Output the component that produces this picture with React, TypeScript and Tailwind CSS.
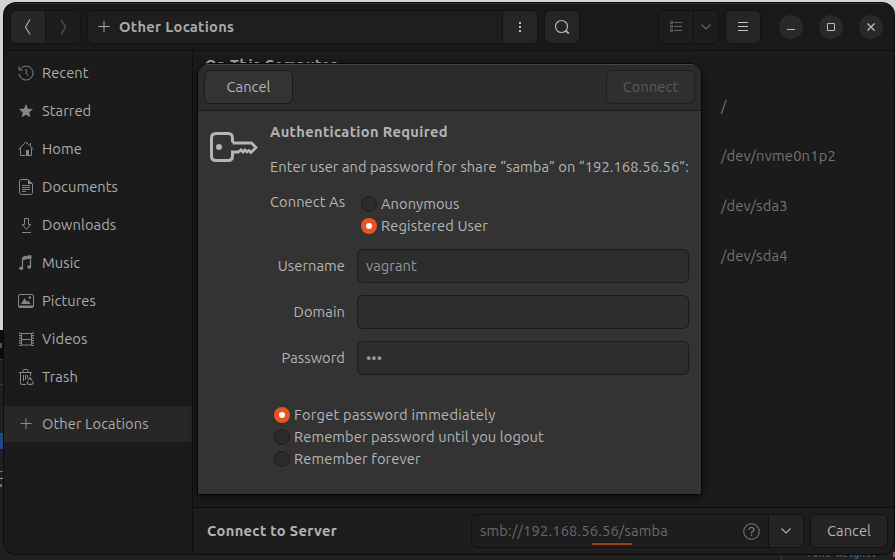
import React from "react";

type Kids = { children?: React.ReactNode; className?: string };

function Icon({ children, className = "" }: Kids) {
  return (
    <svg width="16" height="16" viewBox="0 0 16 16" fill="none" stroke="currentColor" className={`shrink-0 ${className}`}>
      {children}
    </svg>
  );
}

const plus = <path d="M2.5 7.5H13.5M8 2V13" />;
const chevron = <path d="M3.5 5.5L8 10L12.5 5.5" strokeWidth="1.1" />;

const places = [
  {
    name: "Recent",
    icon: <path d="M2.2 4.2A7 7 0 1 1 1.1 9M1 1.5V5H4.5M8.2 4V8.5L10.5 10.8" />,
  },
  {
    name: "Starred",
    icon: <path d="M8 1L10 5.7L15 6.1L11.2 9.4L12.4 14.3L8 11.7L3.6 14.3L4.8 9.4L1 6.1L6 5.7Z" fill="currentColor" stroke="none" />,
  },
  {
    name: "Home",
    icon: (
      <>
        <path d="M.5 8.3L8 1L15.5 8.3M2.5 7V14.5H7.5M13.5 7V14.5H11M12.5 2V4.5" />
        <path d="M8 9H11V15H8Z" fill="currentColor" stroke="none" />
      </>
    ),
  },
  {
    name: "Documents",
    icon: (
      <>
        <path d="M10 .5H3.5Q1.5 .5 1.5 2.5V13.5Q1.5 15.5 3.5 15.5H12.5Q14.5 15.5 14.5 13.5V5M4 6.5H12M4 8.5H12M4 10.5H12M4 12.5H8" />
        <path d="M10 0L15 5H10Z" fill="currentColor" stroke="none" />
      </>
    ),
  },
  {
    name: "Downloads",
    icon: <path d="M6.5 1.5H10.5V7.5H12.7L8.5 12.4L4.3 7.5H6.5ZM4 15.5H13" />,
  },
  {
    name: "Music",
    icon: (
      <>
        <path d="M5 2L13 .5V3L5 4.5Z" fill="currentColor" />
        <path d="M4.5 3V13M12.5 2V11.5" strokeWidth="1.2" />
        <ellipse cx="3.2" cy="13.2" rx="2" ry="1.7" fill="currentColor" stroke="none" />
        <ellipse cx="11.2" cy="12" rx="2" ry="1.7" fill="currentColor" stroke="none" />
      </>
    ),
  },
  {
    name: "Pictures",
    icon: (
      <>
        <rect x=".5" y="1.5" width="15" height="13" rx="1.5" />
        <path d="M1 12.5H15V14.5H1Z" fill="currentColor" stroke="none" />
        <path d="M3 11L6.5 5L9 9L10.5 7.5L12.5 11Z" fill="currentColor" stroke="none" />
        <circle cx="11.8" cy="4.6" r="1.3" fill="currentColor" stroke="none" />
      </>
    ),
  },
  {
    name: "Videos",
    icon: (
      <>
        <path d="M3.5 2V14.5M13.5 2V14.5M3.5 2.5H13.5M3.5 8.5H13.5M3.5 14H13.5" />
        <path d="M2 1.5V15M15 1.5V15" strokeWidth="2" strokeDasharray="1.3 1.2" />
      </>
    ),
  },
  {
    name: "Trash",
    icon: (
      <>
        <path d="M1 3.5H14M5 3V1.5Q5 .5 6 .5H9Q10 .5 10 1.5V3M2.500 4V14Q2.500 15.500 4 15.500H8M12.500 4V7M5.500 6V12M7.500 6V11M9.500 6V9" />
        <path d="M10 11L12 8.600L14.200 11.600M15 12.500Q15.400 15.300 13 15.300H10.500Q8.500 14.500 9.800 12.300" strokeWidth="1.2" />
      </>
    ),
  },
];

const volumes = ["/", "/dev/nvme0n1p2", "/dev/sda3", "/dev/sda4"];

function Radio({ on, children, className = "" }: Kids & { on?: boolean }) {
  return (
    <div className={`flex h-[22px] items-center gap-1 whitespace-nowrap ${className}`}>
      <span
        className={`flex size-4 shrink-0 items-center justify-center rounded-full ${
          on ? "bg-[#e95420]" : "border border-[#1c1c1c] bg-[#2b2b2b]"
        }`}
      >
        {on && <span className="size-[6px] rounded-full bg-white" />}
      </span>
      <span>{children}</span>
    </div>
  );
}

function Field({ label, value }: { label: string; value: string }) {
  return (
    <label className="flex h-[34px] items-center gap-3">
      <span className="w-[75px] text-right">{label}</span>
      <span className="flex h-full w-[332px] items-center rounded-[6px] border border-[#1b1b1b] bg-[#2d2d2d] px-2 text-[#979797]">
        {value}
      </span>
    </label>
  );
}

function WindowButton({ children }: Kids) {
  return (
    <span className="flex size-6 items-center justify-center rounded-full bg-[#292929] text-[#bcbcbc]">
      <Icon>{children}</Icon>
    </span>
  );
}

function HeaderBar() {
  return (
    <header className="flex h-12 shrink-0 items-center border-b border-[#101010] border-t border-t-[#2c2c2c] bg-[#191919] pl-1.5 pr-[11px] text-[#a9a9a9]">
      <div className="flex h-[34px] w-[71px] overflow-hidden rounded-[6px] border border-[#121212]">
        <span className="flex w-[35px] items-center justify-center border-r border-[#121212] bg-[#272727]">
          <Icon><path d="M10 .5L5.500 8L10 15.500" strokeWidth="1.2" /></Icon>
        </span>
        <span className="flex flex-1 items-center justify-center bg-[#1d1d1d] text-[#555]">
          <Icon><path d="M6 .5L10.500 8L6 15.500" strokeWidth="1.2" /></Icon>
        </span>
      </div>
      <div className="ml-1.5 flex h-[34px] w-[451px] overflow-hidden rounded-[6px] border border-[#121212] bg-[#1e1e1e]">
        <div className="flex flex-1 items-center gap-[7px] pl-[8px] font-bold tracking-[0.3px]">
          <Icon>{plus}</Icon>
          <span>Other Locations</span>
        </div>
        <span className="flex w-[35px] items-center justify-center border-l border-[#121212] bg-[#252525] text-[#c0c0c0]">
          <Icon><path d="M7 3H9V5H7ZM7 7H9V9H7ZM7 11H9V13H7Z" fill="currentColor" stroke="none" /></Icon>
        </span>
      </div>
      <span className="ml-1.5 flex h-[34px] w-9 items-center justify-center rounded-[6px] border border-[#121212] bg-[#252525] text-[#b4b4b4]">
        <Icon><circle cx="7.5" cy="7.5" r="6" strokeWidth="1.2" /><path d="M11.5 11.5L14.8 14.5" strokeWidth="1.8" /></Icon>
      </span>
      <div className="ml-auto flex h-[34px] w-[61px] overflow-hidden rounded-[6px] border border-[#121212] bg-[#1d1d1d] text-[#646464]">
        <span className="flex w-[35px] items-center justify-center border-r border-[#121212]">
          <Icon><path d="M2.5 2.5H4.5V4.5H2.5ZM2.5 6.5H4.5V8.5H2.5ZM2.5 10.5H4.5V12.5H2.5ZM6 3.5H14M6 7.5H14M6 11.5H14" /></Icon>
        </span>
        <span className="flex flex-1 items-center justify-center"><Icon>{chevron}</Icon></span>
      </div>
      <span className="ml-1.5 flex h-[34px] w-9 items-center justify-center rounded-[6px] border border-[#121212] bg-[#252525] text-[#c0c0c0]">
        <Icon><path d="M3 3.5H13M3 7.5H13M3 11.5H13" /></Icon>
      </span>
      <div className="ml-[18px] flex gap-4">
        <WindowButton><path d="M4 10.5H12" /></WindowButton>
        <WindowButton><path d="M4.5 4.5H11.5V11.5H4.5Z" /></WindowButton>
        <WindowButton><path d="M4.5 4.5L11.5 11.5M11.5 4.5L4.5 11.5" strokeWidth="1.4" /></WindowButton>
      </div>
    </header>
  );
}

function Sidebar() {
  return (
    <nav className="flex w-[189px] shrink-0 flex-col border-r border-[#0f0f0f] bg-[#1b1b1b] pt-[3px] text-[#acacac]">
      {places.map((p) => (
        <div key={p.name} className="flex h-[38px] items-center gap-2 pl-3.5">
          <Icon className="text-[#858585]">{p.icon}</Icon>
          <span>{p.name}</span>
        </div>
      ))}
      <div className="mt-1 border-t border-[#171717]" />
      <div className="mt-[5px] flex h-9 items-center gap-2 bg-[#272727] pl-3.5">
        <Icon className="text-[#8d8d8d]">{plus}</Icon>
        <span>Other Locations</span>
      </div>
    </nav>
  );
}

function ConnectBar() {
  return (
    <footer className="flex h-[47px] items-center border-t border-[#0f0f0f] bg-[#1d1d1d] pl-3.5 pr-1.5 text-[#b4b4b4]">
      <span className="font-bold tracking-[0.34px]">Connect to Server</span>
      <div className="relative ml-auto flex h-[34px] w-[333px] overflow-hidden rounded-[6px] border border-[#111]">
        <div className="flex flex-1 items-center justify-between pl-2 pr-2 text-[#6a6a6a]">
          <span className="tracking-[0.18px]">smb://192.168.56.56/samba</span>
          <svg width="17" height="17" viewBox="0 0 17 17" fill="none" stroke="#858585">
            <circle cx="8.5" cy="8.5" r="7.8" />
            <path d="M6 6.8Q6 4.5 8.5 4.5T11 6.7Q11 7.8 9.6 8.5T8.5 10.5" strokeWidth="1.2" />
            <path d="M8 11.8H9.2V13H8Z" fill="#858585" stroke="none" />
          </svg>
        </div>
        <span className="flex w-[35px] items-center justify-center border-l border-[#111] bg-[#242424]">
          <Icon>{chevron}</Icon>
        </span>
        <span className="absolute bottom-[2px] left-[120px] h-[2px] w-10 bg-[#a23c18]" />
      </div>
      <span className="ml-1.5 flex h-[34px] w-[78px] items-center justify-center rounded-[6px] border border-[#111] bg-[#242424]">
        Cancel
      </span>
    </footer>
  );
}

function AuthDialog() {
  return (
    <section className="absolute left-[197px] top-[63px] flex h-[432px] w-[505px] flex-col overflow-hidden rounded-t-[12px] border border-[#060606] bg-[#333] text-[#b5b5b5] shadow-[0_3px_10px_rgba(0,0,0,0.5)]">
      <div className="flex h-[47px] shrink-0 items-center justify-between border-b border-[#1b1b1b] border-t border-t-[#444] bg-[#2b2b2b] px-1.5">
        <span className="-mt-px flex h-[34px] w-[89px] items-center justify-center rounded-[6px] border border-[#1b1b1b] bg-[#333]">Cancel</span>
        <span className="-mt-px flex h-[34px] w-[89px] items-center justify-center rounded-[6px] border border-[#1d1d1d] bg-[#2f2f2f] text-[#5b5b5b]">Connect</span>
      </div>
      <div className="flex pl-3 pt-[11px]">
        <svg width="48" height="48" viewBox="0 0 48 48" fill="none" stroke="#b5b5b5" strokeWidth="3" className="shrink-0">
          <path d="M22.500 20.500V16Q22.500 11.500 18 11.500H6Q1.500 11.500 1.500 16V34Q1.500 38.500 6 38.500H18Q22.500 38.500 22.500 34V30H29" />
          <path d="M22.500 21H41.500L46 25.500L41 30.500L39 28.500L37 30L35 28L33 30L31 28L28.500 30" strokeWidth="2.8" />
          <circle cx="9" cy="25" r="3" fill="#b5b5b5" stroke="none" />
        </svg>
        <div className="ml-3 flex flex-col">
          <h1 className="h-5 font-bold tracking-[0.36px]">Authentication Required</h1>
          <p className="mt-[15px] whitespace-nowrap">Enter user and password for share “samba” on “192.168.56.56”:</p>
          <div className="mt-[15px] flex">
            <span className="w-[91px]">Connect As</span>
            <div className="mt-px">
              <Radio>Anonymous</Radio>
              <Radio on className="tracking-[0.14px]">Registered User</Radio>
            </div>
          </div>
          <div className="mt-3 flex flex-col gap-3">
            <Field label="Username" value="vagrant" />
            <Field label="Domain" value="" />
            <Field label="Password" value="•••" />
          </div>
          <div className="ml-1 mt-[29px]">
            <Radio on className="tracking-[0.24px]">Forget password immediately</Radio>
            <Radio className="tracking-[0.1px]">Remember password until you logout</Radio>
            <Radio className="tracking-[0.12px]">Remember forever</Radio>
          </div>
        </div>
      </div>
    </section>
  );
}

function Desktop() {
  return (
    <>
      <div className="absolute left-0 top-0 h-[330px] w-full bg-[#d4d4d4]" />
      <div className="absolute right-0 top-[40px] h-[520px] w-[2px] bg-[#1d1d1f]" />
      <div className="absolute left-0 top-[330px] h-[29px] w-1 bg-[#0c0c0c]" />
      <div className="absolute left-0 top-[343px] h-[5px] w-[2px] bg-[#555]" />
      <div className="absolute left-0 top-[359px] h-px w-1 bg-[#38383a]" />
      <div className="absolute left-0 top-[384px] h-px w-1 bg-[#38383a]" />
      <div className="absolute left-0 top-[433px] h-4 w-[3px] bg-[#1e4a84]" />
      <div className="absolute left-0 top-[471px] h-px w-[3px] bg-[#77777a]" />
      <div className="absolute left-0 top-[478px] h-px w-[3px] bg-[#9a9a9c]" />
      <div className="absolute left-0 top-[484px] h-[3px] w-[2px] bg-[#6d6d70]" />
      <div className="absolute bottom-0 left-[781px] h-1 w-px bg-[#3a3a3c]" />
      <div className="absolute -bottom-px left-[807px] font-['Ubuntu_Mono','Liberation_Mono',monospace] text-[10.4px] leading-4 tracking-normal text-[#436b8a]">
        font-weight:
      </div>
      <div className="absolute right-0 top-[552px] h-[5px] w-[2px] bg-[#a34a8f]" />
    </>
  );
}

export default function App() {
  return (
    <div className="relative h-[560px] w-[895px] overflow-hidden bg-[#202022] pl-[4px] pt-[3px] font-['Ubuntu','Noto_Sans',sans-serif] text-[14.67px] leading-5 tracking-[0.08px]">
      <Desktop />
      <main className="relative flex h-[551px] w-[890px] flex-col overflow-hidden rounded-[12px] bg-[#1b1b1b] shadow-[0_0_0_1px_#0b0b0b]">
        <HeaderBar />
        <div className="flex min-h-0 flex-1">
          <Sidebar />
          <div className="flex min-w-0 flex-1 flex-col">
            <div className="flex-1 bg-[#1b1b1b]">
              <h2 className="h-[30px] border-b border-[#161616] pl-3 pt-1 font-bold leading-5 tracking-[0.5px] text-[#a9a9a9]">On This Computer</h2>
              <div className="h-[230px] border-b border-[#171717] tracking-[0.2px] text-[#747474]">
                {volumes.map((v) => (
                  <div key={v} className="flex h-[50px] items-center pl-[528px]">{v}</div>
                ))}
              </div>
            </div>
            <ConnectBar />
          </div>
        </div>
      </main>
      <AuthDialog />
    </div>
  );
}
